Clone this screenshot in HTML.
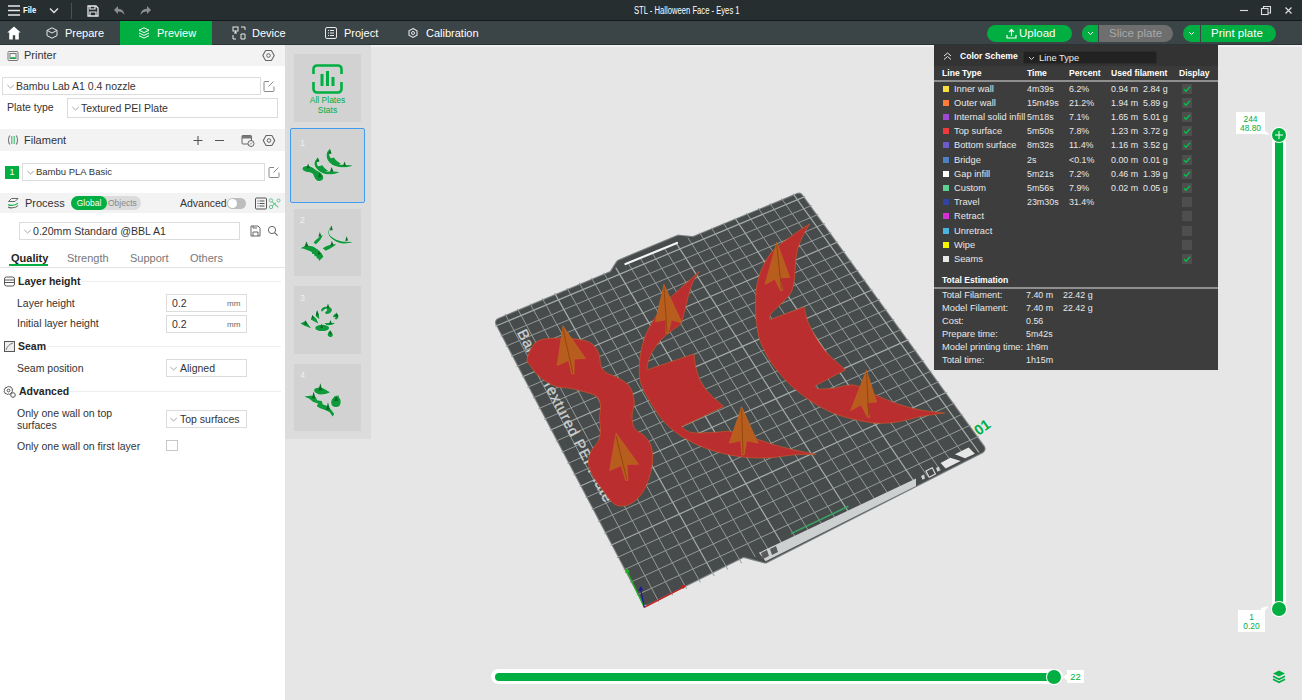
<!DOCTYPE html>
<html><head><meta charset="utf-8">
<style>
*{margin:0;padding:0;box-sizing:border-box}
html,body{width:1302px;height:700px;overflow:hidden;background:#e6e6e6;font-family:"Liberation Sans",sans-serif;color:#262626}
.a{position:absolute;white-space:nowrap}
#title{position:absolute;left:0;top:0;width:1302px;height:21px;background:#262e30;border-bottom:1px solid #131819}
#tabs{position:absolute;left:0;top:21px;width:1302px;height:24px;background:#3b4446;border-bottom:1px solid #2c3335}
.tw{color:#fff;font-size:11px;line-height:12px}
.lp{position:absolute;left:0;top:45px;width:285px;height:655px;background:#fff}
.hdr{position:absolute;left:0;width:285px;background:#f3f3f3}
.lbl{font-size:10.5px;line-height:12px;color:#333}
.combo{position:absolute;border:1px solid #dcdcdc;background:#fff}
.sec{font-size:10.5px;line-height:12px;font-weight:bold;color:#262626}
.legend{position:absolute;left:934px;top:45px;width:284px;height:325px;background:#3d3d3d}
.lg{font-size:9.3px;line-height:10px;color:#e8e8e8}
.lgb{font-size:8.6px;line-height:10px;color:#fff;font-weight:bold}
.sq{position:absolute;width:6px;height:6px}
.cb{position:absolute;width:10px;height:10px;background:#4e4e4e}
.vl{font-size:8px;line-height:10px;color:#00ae42;text-align:center}
</style></head><body>
<!-- title bar -->
<div id="title">
 <svg class="a" style="left:8px;top:5px" width="13" height="11" viewBox="0 0 13 11"><path d="M0 1h12M0 5.5h12M0 10h12" stroke="#e8e8e8" stroke-width="1.5"/></svg>
 <div class="a" style="left:23px;top:5px;font-size:9px;line-height:11px;color:#fff;font-weight:bold;transform:scaleX(.85);transform-origin:left">File</div>
 <svg class="a" style="left:49px;top:7px" width="10" height="7" viewBox="0 0 10 7"><path d="M1 1.5l4 4 4-4" stroke="#e8e8e8" stroke-width="1.3" fill="none"/></svg>
 <div class="a" style="left:71px;top:3px;width:1px;height:16px;background:#4a5254"></div>
 <svg class="a" style="left:87px;top:5px" width="12" height="12" viewBox="0 0 12 12"><path d="M1 1h8l2 2v8H1z" stroke="#e8e8e8" stroke-width="1.3" fill="none"/><path d="M3 1v3h5V1M3 11V7h6v4" stroke="#e8e8e8" stroke-width="1.2" fill="none"/></svg>
 <svg class="a" style="left:113px;top:5px" width="12" height="11" viewBox="0 0 12 11"><path d="M5 1L1 5l4 4V6.5c3 0 5 1 6.5 3.5C11 6 9 4 5 3.8z" fill="#8a8f90"/></svg>
 <svg class="a" style="left:140px;top:5px" width="12" height="11" viewBox="0 0 12 11"><path d="M7 1l4 4-4 4V6.5c-3 0-5 1-6.5 3.5C1 6 3 4 7 3.8z" fill="#8a8f90"/></svg>
 <div class="a" style="left:634px;top:5px;font-size:10px;line-height:12px;color:#fff;transform:scaleX(.765);transform-origin:left">STL - Halloween Face - Eyes 1</div>
 <svg class="a" style="left:1239px;top:5px" width="60" height="12" viewBox="0 0 60 12"><path d="M1 5.5h8" stroke="#ddd" stroke-width="1.1"/><rect x="22.5" y="3.5" width="6.5" height="6" fill="none" stroke="#ddd" stroke-width="1.1"/><path d="M24.5 3.5V1.5h7v6.5h-2.5" fill="none" stroke="#ddd" stroke-width="1.1"/><path d="M46.5 2.5l6 6M52.5 2.5l-6 6" stroke="#ddd" stroke-width="1.2"/></svg>
</div>
<!-- tab bar -->
<div id="tabs">
 <svg class="a" style="left:7px;top:5px" width="14" height="14" viewBox="0 0 14 14"><path d="M7 .5L.3 6.6h1.9V13.5h3.6V9.2h2.4v4.3h3.6V6.6h1.9z" fill="#fff"/></svg>
 <svg class="a" style="left:46px;top:6px" width="12" height="12" viewBox="0 0 12 12"><path d="M6 .8l5 2.6v5.2L6 11.2 1 8.6V3.4z M1 3.4l5 2.6 5-2.6" stroke="#e8e8e8" stroke-width="1" fill="none"/></svg>
 <div class="a tw" style="left:65px;top:6px">Prepare</div>
 <div class="a" style="left:120px;top:0;width:92px;height:24px;background:#00ae42"></div>
 <svg class="a" style="left:138px;top:6px" width="12" height="12" viewBox="0 0 12 12"><path d="M6 .8l5 2.4-5 2.4-5-2.4z M1 6l5 2.4L11 6 M1 8.7l5 2.4 5-2.4" stroke="#fff" stroke-width="1" fill="none"/></svg>
 <div class="a tw" style="left:157px;top:6px">Preview</div>
 <svg class="a" style="left:232px;top:5px" width="14" height="14" viewBox="0 0 14 14"><rect x="1" y="1" width="5" height="4" stroke="#e8e8e8" fill="none"/><path d="M3.5 5v2M2 7h3M1 9v4h3M9 1h4v3M9 8h4v5H9z" stroke="#e8e8e8" fill="none"/></svg>
 <div class="a tw" style="left:252px;top:6px">Device</div>
 <svg class="a" style="left:325px;top:6px" width="12" height="12" viewBox="0 0 12 12"><rect x=".5" y=".5" width="11" height="11" rx="1.5" stroke="#e8e8e8" fill="none"/><path d="M3 3.5h1M5 3.5h4M3 6h1M5 6h4M3 8.5h1M5 8.5h4" stroke="#e8e8e8"/></svg>
 <div class="a tw" style="left:344px;top:6px">Project</div>
 <svg class="a" style="left:408px;top:7px" width="10" height="10" viewBox="0 0 10 10"><path d="M5 .6l4 2.2v4.4L5 9.4 1 7.2V2.8z" stroke="#e8e8e8" stroke-width="1.1" fill="none"/><circle cx="5" cy="5" r="1.5" stroke="#e8e8e8" fill="none"/></svg>
 <div class="a tw" style="left:426px;top:6px">Calibration</div>
 <!-- buttons -->
 <div class="a" style="left:987px;top:4px;width:85px;height:17px;border-radius:9px;background:#00ae42"></div>
 <svg class="a" style="left:1006px;top:7px" width="11" height="11" viewBox="0 0 11 11"><path d="M5.5 8V1.5M3 4l2.5-2.5L8 4M1 7v3h9V7" stroke="#fff" stroke-width="1.2" fill="none"/></svg>
 <div class="a tw" style="left:1019px;top:6px;font-size:11.5px">Upload</div>
 <div class="a" style="left:1082px;top:4px;width:91px;height:17px;border-radius:9px;background:#6e6e6e;overflow:hidden"><div style="position:absolute;left:0;top:0;width:16px;height:17px;background:#00ae42"></div><div style="position:absolute;left:16px;top:0;width:1px;height:17px;background:#3b4446"></div></div>
 <svg class="a" style="left:1087px;top:10px" width="7" height="5" viewBox="0 0 7 5"><path d="M1 1l2.5 2.5L6 1" stroke="#fff" stroke-width="1" fill="none"/></svg>
 <div class="a tw" style="left:1109px;top:6px;font-size:11.5px;color:#a9a9a9">Slice plate</div>
 <div class="a" style="left:1183px;top:4px;width:93px;height:17px;border-radius:9px;background:#00ae42;overflow:hidden"><div style="position:absolute;left:17px;top:0;width:1px;height:17px;background:#3b4446"></div></div>
 <svg class="a" style="left:1188px;top:10px" width="7" height="5" viewBox="0 0 7 5"><path d="M1 1l2.5 2.5L6 1" stroke="#fff" stroke-width="1" fill="none"/></svg>
 <div class="a tw" style="left:1211px;top:6px;font-size:11.5px">Print plate</div>
</div>
<!-- left panel -->
<div class="lp">
 <div class="hdr" style="top:0;height:21px"></div>
 <svg class="a" style="left:7px;top:5px" width="12" height="12" viewBox="0 0 12 12"><rect x="1" y="1.5" width="10" height="9" rx="1" stroke="#777" fill="none"/><rect x="3" y="3.5" width="6" height="5" stroke="#777" fill="none"/><path d="M3.5 8h5" stroke="#00ae42" stroke-width="1.5"/></svg>
 <div class="a lbl" style="left:24px;top:4px;font-size:11px">Printer</div>
 <svg class="a" style="left:262px;top:4px" width="13" height="13" viewBox="0 0 13 13"><path d="M12.20,6.50 L10.83,9.00 L9.35,11.44 L6.50,11.50 L3.65,11.44 L2.17,9.00 L0.80,6.50 L2.17,4.00 L3.65,1.56 L6.50,1.50 L9.35,1.56 L10.83,4.00Z" stroke="#666" stroke-width="1.1" stroke-linejoin="round" fill="none"/><circle cx="6.5" cy="6.5" r="1.8" stroke="#666" fill="none"/></svg>
 <div class="combo" style="left:2px;top:32px;width:259px;height:18px"></div>
 <svg class="a" style="left:7px;top:39px" width="8" height="5" viewBox="0 0 8 5"><path d="M.4 1l3.2 3 3.2-3" stroke="#9a9a9a" stroke-width=".9" fill="none"/></svg>
 <div class="a lbl" style="left:16px;top:35px;font-size:10.5px">Bambu Lab A1 0.4 nozzle</div>
 <svg class="a" style="left:263px;top:35px" width="12" height="12" viewBox="0 0 12 12"><path d="M6 1.5H2A1 1 0 0 0 1 2.5v8a1 1 0 0 0 1 1h8a1 1 0 0 0 1-1V6.5" stroke="#888" fill="none"/><path d="M5.5 6.5l5-5" stroke="#888" fill="none"/></svg>
 <div class="a lbl" style="left:7px;top:56px;font-size:10.5px">Plate type</div>
 <div class="combo" style="left:67px;top:53px;width:211px;height:20px"></div>
 <svg class="a" style="left:72px;top:61px" width="8" height="5" viewBox="0 0 8 5"><path d="M.4 1l3.2 3 3.2-3" stroke="#9a9a9a" stroke-width=".9" fill="none"/></svg>
 <div class="a lbl" style="left:81px;top:57px;font-size:10.5px">Textured PEI Plate</div>

 <div class="hdr" style="top:84px;height:22px"></div>
 <svg class="a" style="left:7px;top:89px" width="12" height="12" viewBox="0 0 12 12"><path d="M2.8 1.5C1 4 1 8 2.8 10.5M9.2 1.5C11 4 11 8 9.2 10.5" stroke="#777" stroke-width="1.1" fill="none"/><path d="M4.8 2v8M7.2 2v8" stroke="#3dbb6a" stroke-width="1.1"/></svg>
 <div class="a lbl" style="left:24px;top:89px;font-size:11px">Filament</div>
 <svg class="a" style="left:192px;top:89px" width="90" height="13" viewBox="0 0 90 13"><path d="M6 2v9M1.5 6.5h9M23 6.5h9" stroke="#555" stroke-width="1.1"/><rect x="50" y="1.5" width="9.5" height="8.5" rx="1" stroke="#666" fill="none"/><path d="M50 1.5h9.5v3H50z" fill="#777"/><circle cx="59" cy="9.5" r="3" fill="#f3f3f3" stroke="#666"/><path d="M58 10.5l2-2" stroke="#666" stroke-width=".8"/><path d="M82.70,6.50 L81.33,9.00 L79.85,11.44 L77.00,11.50 L74.15,11.44 L72.67,9.00 L71.30,6.50 L72.67,4.00 L74.15,1.56 L77.00,1.50 L79.85,1.56 L81.33,4.00Z" stroke="#666" stroke-width="1.1" stroke-linejoin="round" fill="none"/><circle cx="77" cy="6.5" r="1.8" stroke="#666" fill="none"/></svg>

 <div class="a" style="left:5px;top:121px;width:14px;height:13px;background:#00ae42;color:#fff;font-size:9px;line-height:13px;text-align:center">1</div>
 <div class="combo" style="left:22px;top:118px;width:243px;height:18px"></div>
 <svg class="a" style="left:27px;top:125px" width="8" height="5" viewBox="0 0 8 5"><path d="M.4 1l3.2 3 3.2-3" stroke="#9a9a9a" stroke-width=".9" fill="none"/></svg>
 <div class="a lbl" style="left:36px;top:121px;font-size:9.5px">Bambu PLA Basic</div>
 <svg class="a" style="left:268px;top:121px" width="12" height="12" viewBox="0 0 12 12"><path d="M6 1.5H2A1 1 0 0 0 1 2.5v8a1 1 0 0 0 1 1h8a1 1 0 0 0 1-1V6.5" stroke="#888" fill="none"/><path d="M5.5 6.5l5-5" stroke="#888" fill="none"/></svg>

 <div class="hdr" style="top:148px;height:20px"></div>
 <svg class="a" style="left:7px;top:152px" width="12" height="12" viewBox="0 0 12 12"><path d="M1.5 4.5L4.5 1.5H11L8 4.5Z" stroke="#666" stroke-width="1" fill="none"/><path d="M1.2 7.5C2.5 8.8 8.5 8.8 11 6" stroke="#00ae42" stroke-width="1.1" fill="none"/><path d="M1.2 10C2.5 11.3 8.5 11.3 11 8.5" stroke="#666" stroke-width="1.1" fill="none"/></svg>
 <div class="a lbl" style="left:25px;top:152px;font-size:11px">Process</div>
 <div class="a" style="left:71px;top:151px;width:70px;height:14px;border-radius:7px;background:#dcdcdc"></div>
 <div class="a" style="left:71px;top:151px;width:36px;height:14px;border-radius:7px;background:#00ae42;color:#fff;font-size:8.5px;line-height:14px;text-align:center">Global</div>
 <div class="a" style="left:108px;top:151px;font-size:8.5px;line-height:14px;color:#888">Objects</div>
 <div class="a lbl" style="left:180px;top:152px;font-size:10.5px">Advanced</div>
 <div class="a" style="left:227px;top:153px;width:19px;height:11px;border-radius:6px;background:#bdbdbd"></div>
 <div class="a" style="left:228px;top:154px;width:9px;height:9px;border-radius:5px;background:#fff"></div>
 <svg class="a" style="left:255px;top:152px" width="26" height="13" viewBox="0 0 26 13"><rect x=".5" y="1" width="11" height="11" rx="1" stroke="#555" fill="none"/><path d="M2.5 4h1M4.5 4h5M2.5 6.5h1M4.5 6.5h5M2.5 9h1M4.5 9h5" stroke="#555"/><circle cx="16" cy="3.5" r="1.7" stroke="#6cc58e" fill="none"/><circle cx="16" cy="10" r="1.7" stroke="#6cc58e" fill="none"/><circle cx="23.5" cy="3.5" r="1.5" stroke="#6cc58e" fill="none"/><path d="M17.3 4.8l6 5.5M17.3 8.8l3.5-3" stroke="#6cc58e" stroke-width="1.1"/></svg>

 <div class="combo" style="left:19px;top:177px;width:221px;height:18px"></div>
 <svg class="a" style="left:24px;top:184px" width="8" height="5" viewBox="0 0 8 5"><path d="M.4 1l3.2 3 3.2-3" stroke="#9a9a9a" stroke-width=".9" fill="none"/></svg>
 <div class="a lbl" style="left:33px;top:180px;font-size:10.6px">0.20mm Standard @BBL A1</div>
 <svg class="a" style="left:250px;top:180px" width="30" height="12" viewBox="0 0 30 12"><path d="M1 1h7l2 2v8H1z" stroke="#666" fill="none"/><path d="M3 11V7h5v4M3 1v2h4" stroke="#666" fill="none"/><circle cx="22" cy="5" r="3.6" stroke="#666" fill="none"/><path d="M24.6 7.6l3 3" stroke="#666" stroke-width="1.2"/></svg>

 <div class="a lbl" style="left:11px;top:207px;font-size:11px;font-weight:bold;color:#262626">Quality</div>
 <div class="a" style="left:9px;top:219px;width:39px;height:2px;background:#00ae42"></div>
 <div class="a lbl" style="left:67px;top:207px;font-size:11px;color:#777">Strength</div>
 <div class="a lbl" style="left:130px;top:207px;font-size:11px;color:#777">Support</div>
 <div class="a lbl" style="left:190px;top:207px;font-size:11px;color:#777">Others</div>
 <div class="a" style="left:0;top:222px;width:285px;height:1px;background:#e3e3e3"></div>

 <svg class="a" style="left:4px;top:231px" width="11" height="11" viewBox="0 0 11 11"><rect x=".5" y="1" width="10" height="9" rx="2" stroke="#555" fill="none"/><path d="M1 4h9M1 6.5h9" stroke="#555"/></svg>
 <div class="a sec" style="left:18px;top:230px">Layer height</div>
 <div class="a" style="left:81px;top:236px;width:200px;height:1px;background:#eeeeee"></div>
 <div class="a lbl" style="left:17px;top:252px">Layer height</div>
 <div class="combo" style="left:166px;top:249px;width:81px;height:18px"></div>
 <div class="a lbl" style="left:172px;top:252px">0.2</div>
 <div class="a" style="left:227px;top:254px;font-size:8px;line-height:10px;color:#666">mm</div>
 <div class="a lbl" style="left:17px;top:272px">Initial layer height</div>
 <div class="combo" style="left:166px;top:270px;width:81px;height:18px"></div>
 <div class="a lbl" style="left:172px;top:273px">0.2</div>
 <div class="a" style="left:227px;top:275px;font-size:8px;line-height:10px;color:#666">mm</div>

 <svg class="a" style="left:4px;top:296px" width="11" height="11" viewBox="0 0 11 11"><rect x=".5" y=".5" width="10" height="10" stroke="#555" fill="#eee"/><path d="M2 9C3 5 6 3 9 2" stroke="#777" fill="none"/></svg>
 <div class="a sec" style="left:18px;top:295px">Seam</div>
 <div class="a" style="left:48px;top:301px;width:233px;height:1px;background:#eeeeee"></div>
 <div class="a lbl" style="left:17px;top:317px">Seam position</div>
 <div class="combo" style="left:166px;top:314px;width:81px;height:18px"></div>
 <svg class="a" style="left:170px;top:321px" width="8" height="5" viewBox="0 0 8 5"><path d="M.4 1l3.2 3 3.2-3" stroke="#9a9a9a" stroke-width=".9" fill="none"/></svg>
 <div class="a lbl" style="left:180px;top:317px">Aligned</div>

 <svg class="a" style="left:3px;top:340px" width="13" height="13" viewBox="0 0 13 13"><path d="M5.5 1l1 1 1.4-.2.4 1.3 1.2.7-.4 1.3.6 1.1-1.1.9v1.3l-1.4.2-.8 1-1.1-.7-1.1.7-.8-1-1.4-.2V7.6l-1.1-.9.6-1.1-.4-1.3 1.2-.7.4-1.3 1.4.2z" stroke="#555" fill="none"/><circle cx="5.5" cy="5.5" r="1.4" stroke="#555" fill="none"/><circle cx="10" cy="10" r="2.3" stroke="#555" fill="#fff"/></svg>
 <div class="a sec" style="left:19px;top:340px">Advanced</div>
 <div class="a" style="left:70px;top:346px;width:211px;height:1px;background:#eeeeee"></div>
 <div class="a lbl" style="left:17px;top:362px">Only one wall on top</div>
 <div class="a lbl" style="left:17px;top:374px">surfaces</div>
 <div class="combo" style="left:166px;top:365px;width:81px;height:18px"></div>
 <svg class="a" style="left:170px;top:372px" width="8" height="5" viewBox="0 0 8 5"><path d="M.4 1l3.2 3 3.2-3" stroke="#9a9a9a" stroke-width=".9" fill="none"/></svg>
 <div class="a lbl" style="left:180px;top:368px">Top surfaces</div>
 <div class="a lbl" style="left:17px;top:395px">Only one wall on first layer</div>
 <div class="a" style="left:166px;top:395px;width:12px;height:11px;border:1px solid #c8c8c8;background:#fff"></div>
</div>
<!-- plate list -->
<div id="vline" class="a" style="left:285px;top:45px;width:1017px;height:2px;background:#f1f1f1"></div>
<div class="a" style="left:285px;top:45px;width:86px;height:394px;background:#dcdcdc"></div>
<div class="a" style="left:294px;top:54px;width:67px;height:68px;background:#d2d2d2"></div>
<svg class="a" style="left:312px;top:64px" width="31" height="30" viewBox="0 0 31 30"><path d="M1.5 10V5a3.5 3.5 0 0 1 3.5-3.5h21a3.5 3.5 0 0 1 3.5 3.5v5M1.5 18v7a3.5 3.5 0 0 0 3.5 3.5h21a3.5 3.5 0 0 0 3.5-3.5v-7" stroke="#00ae42" stroke-width="2.6" fill="none"/><path d="M10 10v12M15.5 7v15M21 13v9" stroke="#00ae42" stroke-width="3"/></svg>
<div class="a" style="left:294px;top:95px;width:67px;font-size:8.5px;line-height:10px;color:#00ae42;text-align:center">All Plates<br>Stats</div>

<div class="a" style="left:290px;top:128px;width:75px;height:75px;border:1.5px solid #3f9cf0;border-radius:2px;background:#d2d2d2"></div>
<div class="a" style="left:300px;top:138px;font-size:9px;line-height:10px;color:#efefef">1</div>
<svg class="a" style="left:294px;top:131px" width="67" height="70" viewBox="0 0 670 700">
<g fill="#0e9a3a" stroke="#eeeeee" stroke-width="7" paint-order="stroke">
<path d="M85,375 C85,348 132,343 168,357 C198,369 215,390 240,403 C276,420 298,445 292,476 C286,502 250,508 226,492 C203,476 203,447 188,427 C170,410 140,412 113,404 C94,397 85,390 85,375Z"/>
<path d="M245,262 C230,292 222,325 240,352 L285,343 C297,365 315,385 342,395 L314,405 C352,405 400,403 457,410 C420,430 358,440 305,428 C255,412 215,378 205,336 C200,305 220,278 245,262Z"/>
<path d="M366,176 C350,208 345,245 368,272 L400,266 C418,293 440,313 467,324 L450,336 C490,340 540,342 592,345 C545,366 468,372 398,345 C355,322 326,288 326,242 C326,213 343,192 366,176Z"/>
</g>
<g fill="#0a6b26"><path d="M140,325 L125,375 L160,370Z M238,262 L225,310 L255,305Z M375,360 L360,410 L395,405Z M505,305 L490,350 L520,345Z M255,415 L240,465 L275,460Z M360,178 L345,230 L375,225Z"/></g></svg>
<div class="a" style="left:294px;top:209px;width:67px;height:67px;background:#d2d2d2"></div>
<div class="a" style="left:300px;top:215px;font-size:9px;line-height:10px;color:#efefef">2</div>
<svg class="a" style="left:294px;top:209px" width="67" height="67" viewBox="0 0 700 700">
<g fill="#0e9a3a" stroke="#eeeeee" stroke-width="7" paint-order="stroke">
<path d="M65,410 L130,378 L200,392 L245,420 L290,465 L308,500 L262,542 L252,515 L238,520 L232,490 L215,495 L210,470 L190,470 L185,448 L160,440 L100,415Z"/>
<path d="M205,350 C225,320 260,290 300,268 C295,300 270,335 225,370 Z"/>
<path d="M300,410 C330,385 390,365 440,370 C410,395 370,420 330,435 Z"/>
<path d="M390,175 C365,215 355,260 385,285 C420,310 450,330 500,340 C540,342 580,343 620,345 C580,360 530,365 480,355 C440,345 400,320 375,290 C350,260 355,210 390,175Z"/>
</g>
<g fill="#0a6b26"><path d="M130,340 L110,395 L150,390Z M270,240 L255,290 L285,285Z M395,335 L380,385 L415,380Z M550,285 L535,335 L565,330Z M260,430 L245,480 L280,475Z M390,170 L375,225 L405,220Z"/></g></svg>
<div class="a" style="left:294px;top:286px;width:67px;height:68px;background:#d2d2d2"></div>
<div class="a" style="left:300px;top:293px;font-size:9px;line-height:10px;color:#efefef">3</div>
<svg class="a" style="left:294px;top:286px" width="67" height="68" viewBox="0 0 690 700">
<g fill="#0e9a3a" stroke="#eeeeee" stroke-width="7" paint-order="stroke">
<path d="M278,245 C300,205 360,200 388,235 C398,265 370,290 330,290 L318,268 C340,262 348,245 335,232 C315,238 298,255 285,268Z"/>
<path d="M235,250 L258,300 L262,342 L222,310Z"/>
<path d="M190,300 L232,340 L252,388 L172,345Z"/>
<path d="M65,385 L120,358 L178,438 L108,410Z"/>
<path d="M398,322 C410,290 430,270 455,295 C465,320 450,345 428,345 L415,330 L438,318Z"/>
<path d="M310,380 L425,378 C405,400 370,408 335,402Z"/>
<ellipse cx="290" cy="432" rx="72" ry="32"/>
<path d="M372,455 C385,470 402,490 400,505 C398,522 385,528 370,526 C350,522 343,505 348,490 C352,478 362,465 372,455Z"/>
</g>
<g fill="#0a6b26"><path d="M120,350 L105,400 L135,395Z M240,250 L225,300 L255,295Z M350,180 L335,230 L365,225Z M440,270 L425,320 L455,315Z M375,350 L360,395 L390,390Z M285,385 L270,435 L300,430Z M375,455 L360,500 L390,495Z M190,295 L180,335 L205,330Z"/></g></svg>
<div class="a" style="left:294px;top:364px;width:67px;height:67px;background:#d2d2d2"></div>
<div class="a" style="left:300px;top:370px;font-size:9px;line-height:10px;color:#efefef">4</div>
<svg class="a" style="left:294px;top:364px" width="67" height="67" viewBox="0 0 700 700">
<g fill="#0e9a3a" stroke="#eeeeee" stroke-width="7" paint-order="stroke">
<path d="M210,270 C225,245 270,240 310,255 C335,268 355,285 380,292 C350,312 300,325 255,315 C225,305 205,290 210,270Z"/>
<path d="M105,340 L180,328 L230,350 L242,380 L292,386 L300,420 L350,440 L382,470 L420,520 L405,552 L372,505 L330,482 L272,462 L238,442 L250,412 L200,396 L160,362Z"/>
<path d="M420,328 L440,345 L465,325 L470,350 C490,370 495,400 480,430 C460,455 420,455 400,435 C380,410 385,370 420,345Z"/>
</g>
<g fill="#0a6b26"><path d="M275,200 L255,280 L295,275Z M205,290 L185,360 L225,355Z M355,400 L335,480 L375,475Z M440,325 L420,390 L460,385Z"/></g></svg>
<svg class="a" style="left:0;top:0" width="1302" height="700" viewBox="0 0 1302 700">
<defs><clipPath id="pc"><path d="M643.9,608.7 L987.5,448.4 L800.8,190.4 L491.6,319.5Z"/></clipPath></defs>
<path d="M646.4,600.7 L743.2,552.6 L765.0,558.5 L980.5,448.8 L798.8,197.7 L693.7,241.1 L678.8,239.6 L620.4,264.0 L613.4,275.0 L500.0,322.5Z" fill="#7b8080" stroke="#7b8080" stroke-width="10" stroke-linejoin="round"/>
<path d="M646.4,600.7 L743.2,552.6 L765.0,558.5 L980.5,448.8 L798.8,197.7 L693.7,241.1 L678.8,239.6 L620.4,264.0 L613.4,275.0 L500.0,322.5Z" fill="#474b4b" stroke="#474b4b" stroke-width="7.8" stroke-linejoin="round"/>
<g clip-path="url(#pc)">
<path d="M659.7,603.4L504.5,312.8M634.8,596.0L980.4,435.5M673.6,596.9L516.9,307.6M628.2,583.3L972.2,424.3M687.5,590.4L529.4,302.4M621.6,570.9L964.2,413.3M701.3,584.0L541.7,297.3M615.1,558.5L956.3,402.3M728.8,571.1L566.4,287.0M602.4,534.2L940.7,380.8M742.5,564.7L578.6,281.9M596.1,522.3L933.0,370.2M756.2,558.4L590.8,276.8M589.9,510.4L925.3,359.6M769.7,552.0L603.0,271.7M583.8,498.7L917.8,349.2M796.7,539.4L627.2,261.6M571.7,475.7L902.9,328.7M810.1,533.2L639.3,256.6M565.7,464.4L895.6,318.7M823.5,526.9L651.3,251.6M559.8,453.1L888.4,308.7M836.8,520.7L663.3,246.6M554.0,442.0L881.2,298.8M863.3,508.3L687.1,236.6M542.5,420.2L867.0,279.2M876.5,502.2L698.9,231.7M536.9,409.4L860.1,269.6M889.6,496.1L710.7,226.8M531.3,398.7L853.2,260.1M902.6,490.0L722.5,221.8M525.7,388.2L846.3,250.7M928.6,477.8L745.9,212.1M514.8,367.4L832.9,232.1M941.5,471.8L757.6,207.2M509.4,357.1L826.2,222.9M954.4,465.8L769.2,202.4M504.1,347.0L819.6,213.8M967.2,459.8L780.8,197.5M498.8,336.9L813.1,204.9" stroke="#939a98" stroke-width="1" fill="none"/>
<path d="M715.1,577.5L554.1,292.1M608.7,546.3L948.4,391.5M783.2,545.7L615.1,266.6M577.7,487.2L910.3,338.9M850.1,514.5L675.2,241.6M548.2,431.0L874.1,289.0M915.7,483.9L734.2,217.0M520.2,377.7L839.6,241.3M980.0,453.8L792.3,192.7M493.6,327.0L806.6,195.9" stroke="#a3aaa7" stroke-width="1.25" fill="none"/>
</g>
<!-- bottom strip -->
<path d="M758.9,552.8 L916,478.4 L916,486 L765.6,561.2 Z" fill="#cdd0d0"/>
<path d="M791,533.6 L848.4,506.3" stroke="#3aa565" stroke-width="1.6"/>
<path d="M761,553 L767,550 L769,556 L763,559Z" fill="#5a5a5a"/>
<path d="M770,549 L776,546 L778,552 L772,555Z" fill="#5a5a5a"/>
<path d="M940.6,462.9 L950.3,457.7 L960.6,461.1 L945.7,468.6Z" fill="#e6e6e6"/>
<path d="M954.9,454.3 L968.6,447.4 L974.9,453.7 L965.1,458.3Z" fill="#e6e6e6"/>
<rect x="0" y="0" width="7" height="7" transform="translate(926,471) rotate(-27)" fill="none" stroke="#e0e0e0" stroke-width="1.1"/>
<path d="M921,476 l3,-1.5 l1,4 l-2.5,1.2z M936,468 l3,-1.5 l1,4 l-2.5,1.2z" fill="#d0d0d0"/>
<path d="M625.5,264 L677,243" stroke="#f4f4f4" stroke-width="2.2" stroke-linecap="round"/>
<text transform="translate(516.8,332.6) rotate(62.8)" style="font-family:'Liberation Sans';font-size:15px;letter-spacing:0.7px" fill="#cdd0d0" stroke="#cdd0d0" stroke-width="0.3">Bambu Textured PEI Plate</text>
<!--shapes-->
<path d="M527.1,358.9 C527.9,355.0 531.1,346.3 535.1,342.9 C539.1,339.5 543.8,338.9 551.0,338.3 C558.2,337.7 571.7,338.4 578.6,339.4 C585.5,340.3 588.9,341.5 592.3,344.0 C595.7,346.5 597.5,350.6 599.0,354.3 C600.5,358.0 599.8,363.0 601.0,366.0 C602.2,369.0 603.0,370.4 606.0,372.5 C609.0,374.6 615.3,376.2 619.3,378.6 C623.3,381.0 627.5,383.2 630.0,387.1 C632.5,391.0 633.9,397.5 634.3,402.1 C634.6,406.8 632.1,410.7 632.1,415.0 C632.1,419.3 632.1,424.3 634.3,427.9 C636.4,431.5 642.1,433.2 645.0,436.4 C647.9,439.6 650.1,442.8 651.4,447.1 C652.6,451.4 652.9,457.1 652.5,462.1 C652.1,467.1 650.9,472.1 649.3,477.1 C647.7,482.1 645.8,487.8 642.9,492.1 C640.0,496.4 635.7,500.6 632.1,502.9 C628.5,505.2 624.6,506.1 621.4,506.1 C618.2,506.1 615.8,505.2 612.9,502.9 C610.0,500.6 607.5,496.4 604.3,492.1 C601.1,487.8 596.2,481.8 593.6,477.1 C591.0,472.4 588.9,468.3 588.5,464.0 C588.1,459.7 589.3,455.3 591.0,451.4 C592.7,447.5 596.9,444.3 598.5,440.7 C600.1,437.1 600.3,433.8 600.5,430.0 C600.7,426.2 599.5,422.2 599.5,418.0 C599.5,413.8 601.1,408.7 600.5,405.0 C599.9,401.3 598.9,398.3 596.0,396.0 C593.1,393.7 587.3,392.7 583.0,391.4 C578.7,390.1 574.5,389.0 570.0,388.2 C565.5,387.4 560.8,388.2 555.7,386.3 C550.7,384.4 543.9,380.4 539.7,377.0 C535.5,373.6 532.7,369.0 530.6,366.0 C528.5,363.0 526.4,362.8 527.1,358.9Z" fill="#bb2e2f" stroke="#c9582a" stroke-width=".7"/>
<path d="M699.3,271.4 C698.2,273.2 694.7,278.2 692.9,282.1 C691.1,286.0 689.9,290.7 688.6,295.0 C687.4,299.3 686.6,303.2 685.4,307.9 C684.1,312.5 683.1,319.3 681.1,322.9 C679.1,326.5 676.6,326.8 673.6,329.3 C670.6,331.8 666.1,334.7 662.9,337.9 C659.7,341.1 656.6,345.0 654.3,348.6 C652.0,352.2 650.1,355.7 648.9,359.3 C647.6,362.9 647.1,368.2 646.8,370.0 L693.9,353.9 C694.4,356.9 695.1,366.2 697.1,372.1 C699.1,378.0 701.3,383.6 705.7,389.3 C710.1,395.1 720.6,403.7 723.6,406.6 L681.5,426.6 C682.4,427.3 684.7,429.8 687.0,430.8 C689.3,431.9 690.5,432.7 695.3,432.9 C700.1,433.1 710.0,432.4 716.0,432.2 C722.0,432.0 725.4,430.7 731.2,431.5 C737.0,432.3 743.9,434.9 750.6,437.0 C757.3,439.1 764.4,441.8 771.3,443.9 C778.2,446.0 784.7,447.7 792.1,449.4 C799.5,451.1 811.7,453.5 815.6,454.3 C811.7,454.4 799.5,454.4 792.1,455.0 C784.7,455.6 778.2,457.2 771.3,457.7 C764.4,458.1 757.5,458.1 750.6,457.7 C743.7,457.2 736.8,456.4 729.9,455.0 C723.0,453.6 715.3,451.5 709.1,449.4 C702.9,447.3 698.2,445.5 692.5,442.5 C686.8,439.5 679.9,435.6 674.6,431.5 C669.3,427.4 664.9,422.8 660.7,417.7 C656.6,412.6 652.9,406.6 649.7,401.1 C646.5,395.7 643.1,389.8 641.4,385.0 C639.7,380.2 639.5,377.1 639.3,372.1 C639.1,367.1 639.5,360.7 640.4,355.0 C641.3,349.3 642.5,343.6 644.6,337.9 C646.7,332.2 649.8,326.4 653.2,320.7 C656.6,315.0 660.9,308.6 665.0,303.6 C669.1,298.6 674.0,294.4 677.9,290.7 C681.8,286.9 685.0,284.3 688.6,281.1 C692.2,277.9 697.5,273.0 699.3,271.4 Z" fill="#bb2e2f" stroke="#c9582a" stroke-width=".7"/>
<path d="M809.8,224.0 C808.8,225.6 805.9,229.8 803.9,233.8 C801.9,237.8 799.4,243.3 798.0,248.0 C796.6,252.7 796.2,257.0 795.6,262.1 C795.0,267.2 795.3,273.5 794.5,278.6 C793.7,283.7 793.3,288.4 790.9,292.7 C788.5,297.0 783.6,301.0 780.3,304.5 C777.0,308.0 772.7,311.3 770.9,313.9 C769.1,316.4 769.9,318.8 769.7,319.8 L803.9,306.9 C804.7,309.6 805.9,317.1 808.6,323.4 C811.4,329.7 816.8,339.2 820.4,344.6 C824.0,350.0 825.8,351.8 830.0,356.0 C834.2,360.2 842.8,367.6 845.4,369.9 L814.7,386.0 C815.3,386.5 815.4,388.5 818.4,388.9 C821.4,389.3 826.9,388.8 833.0,388.2 C839.1,387.6 847.5,384.0 854.8,385.2 C862.1,386.4 869.4,392.2 876.7,395.4 C884.0,398.6 891.3,401.8 898.6,404.2 C905.9,406.6 912.8,408.5 920.5,410.0 C928.2,411.5 940.6,412.5 944.6,413.0 C940.6,413.6 928.2,415.2 920.5,416.6 C912.8,418.1 905.9,420.6 898.6,421.7 C891.3,422.8 884.0,423.6 876.7,423.2 C869.4,422.8 862.1,421.2 854.8,419.5 C847.5,417.8 840.3,416.0 833.0,413.0 C825.7,410.0 818.4,406.2 811.1,401.3 C803.8,396.4 795.8,390.1 789.2,383.8 C782.6,377.5 776.1,369.4 771.7,363.3 C767.3,357.2 765.2,352.4 762.9,347.3 C760.6,342.2 759.2,339.2 758.0,332.8 C756.8,326.4 755.8,317.1 755.6,309.2 C755.4,301.3 755.6,292.8 756.8,285.7 C758.0,278.6 760.0,272.7 762.7,266.8 C765.5,260.9 768.8,255.2 773.3,250.3 C777.8,245.4 785.1,240.9 789.8,237.4 C794.5,233.9 798.2,231.3 801.5,229.1 C804.8,226.9 808.4,224.8 809.8,224.0 Z" fill="#bb2e2f" stroke="#c9582a" stroke-width=".7"/>
<!--/shapes-->
<g fill="#b75d1d" stroke="#c46a26" stroke-width=".5">
<path d="M562.9,325.7 L585.7,358.6 L574.3,358.9 L574.1,374.0 L571.7,374.0 L568.5,360.4 L557.1,365.7Z"/>
<path d="M616.1,433.2 L638.6,464.3 L627.0,464.4 L628.0,480.4 L625.6,480.4 L621.2,465.6 L609.6,470.7Z"/>
<path d="M663.9,284.3 L682.1,322.9 L671.4,320.0 L668.3,333.6 L665.9,333.6 L666.1,319.7 L655.4,321.8Z"/>
<path d="M741.6,406.6 L758.2,443.2 L746.6,440.7 L744.2,455.0 L741.8,455.0 L740.8,440.7 L729.2,443.2Z"/>
<path d="M776.8,242.1 L789.8,277.4 L779.9,277.7 L782.7,290.4 L780.3,290.4 L774.9,279.2 L765.0,284.5Z"/>
<path d="M866.5,369.9 L876.7,402.0 L866.2,403.0 L869.9,417.3 L867.5,417.3 L861.0,404.8 L850.5,410.8Z"/>
</g>
<g stroke="#94470f" stroke-width="1">
<path d="M562.9,328.7 L572.9,373.0"/>
<path d="M616.1,436.2 L626.8,479.4"/>
<path d="M663.9,287.3 L667.1,332.6"/>
<path d="M741.6,409.6 L743.0,454.0"/>
<path d="M776.8,245.1 L781.5,289.4"/>
<path d="M866.5,372.9 L868.7,416.3"/>
</g>
<text transform="translate(978.5,436) rotate(-35)" style="font-family:'Liberation Sans';font-size:14.5px;font-weight:bold" fill="#00ae42">01</text>
<path d="M644.3,607.4 L627,571" stroke="#1db41d" stroke-width="1.2"/><path d="M625,573 L627,568 L630,572Z" fill="#1db41d"/>
<path d="M644.3,607.4 L684,587" stroke="#cc1a1a" stroke-width="1.2"/><path d="M681,585 L686.5,585.5 L683,589Z" fill="#cc1a1a"/>
<path d="M644.3,607.4 L640.8,590" stroke="#1a1a9a" stroke-width="1.2"/><path d="M638.5,591 L640.5,586 L643,590Z" fill="#1a1a9a"/>
</svg>

<!-- legend -->
<div class="legend">
 <div class="a" style="left:0;top:0;width:284px;height:21px;background:#333333"></div>
 <svg class="a" style="left:9px;top:7px" width="9" height="8" viewBox="0 0 9 8"><path d="M1 4l3.5-3L8 4M1 7.5l3.5-3L8 7.5" stroke="#e8e8e8" stroke-width="1" fill="none"/></svg>
 <div class="a lgb" style="left:26px;top:6px">Color Scheme</div>
 <div class="a" style="left:89px;top:6px;width:134px;height:13px;background:#222;border:1px solid #2c2c2c;border-radius:2px"></div>
 <svg class="a" style="left:94px;top:11px" width="7" height="5" viewBox="0 0 7 5"><path d="M1 1l2.5 2.5L6 1" stroke="#ddd" stroke-width=".9" fill="none"/></svg>
 <div class="a lg" style="left:105px;top:8px">Line Type</div>
 <div class="a" style="left:0;top:21px;width:284px;height:14px;background:#3a3a3a"></div>
 <div class="a lgb" style="left:8px;top:23px">Line Type</div>
 <div class="a lgb" style="left:93px;top:23px">Time</div>
 <div class="a lgb" style="left:135px;top:23px">Percent</div>
 <div class="a lgb" style="left:177px;top:23px">Used filament</div>
 <div class="a lgb" style="left:245px;top:23px">Display</div>
 <div class="a" style="left:0;top:35px;width:284px;height:2px;background:#8f8f8f"></div>
 <div class="sq" style="left:9px;top:40.6px;background:#f7df3f"></div>
 <div class="a lg" style="left:20px;top:38.6px">Inner wall</div>
 <div class="a lg" style="font-size:8.9px;left:93px;top:38.6px">4m39s</div>
 <div class="a lg" style="font-size:8.9px;left:135px;top:38.6px">6.2%</div>
 <div class="a lg" style="font-size:8.9px;left:177px;top:38.6px">0.94 m</div>
 <div class="a lg" style="font-size:8.9px;left:209px;top:38.6px">2.84 g</div>
 <div class="cb" style="left:248px;top:38.6px"></div>
 <svg class="a" style="left:249px;top:39.6px" width="8" height="8" viewBox="0 0 8 8"><path d="M1 4.2l2 2L7 1.8" stroke="#00c24a" stroke-width="1.3" fill="none"/></svg>
 <div class="sq" style="left:9px;top:54.8px;background:#fe7c34"></div>
 <div class="a lg" style="left:20px;top:52.8px">Outer wall</div>
 <div class="a lg" style="font-size:8.9px;left:93px;top:52.8px">15m49s</div>
 <div class="a lg" style="font-size:8.9px;left:135px;top:52.8px">21.2%</div>
 <div class="a lg" style="font-size:8.9px;left:177px;top:52.8px">1.94 m</div>
 <div class="a lg" style="font-size:8.9px;left:209px;top:52.8px">5.89 g</div>
 <div class="cb" style="left:248px;top:52.8px"></div>
 <svg class="a" style="left:249px;top:53.8px" width="8" height="8" viewBox="0 0 8 8"><path d="M1 4.2l2 2L7 1.8" stroke="#00c24a" stroke-width="1.3" fill="none"/></svg>
 <div class="sq" style="left:9px;top:69.0px;background:#9e49d4"></div>
 <div class="a lg" style="left:20px;top:67.0px">Internal solid infill</div>
 <div class="a lg" style="font-size:8.9px;left:93px;top:67.0px">5m18s</div>
 <div class="a lg" style="font-size:8.9px;left:135px;top:67.0px">7.1%</div>
 <div class="a lg" style="font-size:8.9px;left:177px;top:67.0px">1.65 m</div>
 <div class="a lg" style="font-size:8.9px;left:209px;top:67.0px">5.01 g</div>
 <div class="cb" style="left:248px;top:67.0px"></div>
 <svg class="a" style="left:249px;top:68.0px" width="8" height="8" viewBox="0 0 8 8"><path d="M1 4.2l2 2L7 1.8" stroke="#00c24a" stroke-width="1.3" fill="none"/></svg>
 <div class="sq" style="left:9px;top:83.2px;background:#ee3a3a"></div>
 <div class="a lg" style="left:20px;top:81.2px">Top surface</div>
 <div class="a lg" style="font-size:8.9px;left:93px;top:81.2px">5m50s</div>
 <div class="a lg" style="font-size:8.9px;left:135px;top:81.2px">7.8%</div>
 <div class="a lg" style="font-size:8.9px;left:177px;top:81.2px">1.23 m</div>
 <div class="a lg" style="font-size:8.9px;left:209px;top:81.2px">3.72 g</div>
 <div class="cb" style="left:248px;top:81.2px"></div>
 <svg class="a" style="left:249px;top:82.2px" width="8" height="8" viewBox="0 0 8 8"><path d="M1 4.2l2 2L7 1.8" stroke="#00c24a" stroke-width="1.3" fill="none"/></svg>
 <div class="sq" style="left:9px;top:97.4px;background:#6a5ccb"></div>
 <div class="a lg" style="left:20px;top:95.4px">Bottom surface</div>
 <div class="a lg" style="font-size:8.9px;left:93px;top:95.4px">8m32s</div>
 <div class="a lg" style="font-size:8.9px;left:135px;top:95.4px">11.4%</div>
 <div class="a lg" style="font-size:8.9px;left:177px;top:95.4px">1.16 m</div>
 <div class="a lg" style="font-size:8.9px;left:209px;top:95.4px">3.52 g</div>
 <div class="cb" style="left:248px;top:95.4px"></div>
 <svg class="a" style="left:249px;top:96.4px" width="8" height="8" viewBox="0 0 8 8"><path d="M1 4.2l2 2L7 1.8" stroke="#00c24a" stroke-width="1.3" fill="none"/></svg>
 <div class="sq" style="left:9px;top:111.6px;background:#4c82c4"></div>
 <div class="a lg" style="left:20px;top:109.6px">Bridge</div>
 <div class="a lg" style="font-size:8.9px;left:93px;top:109.6px">2s</div>
 <div class="a lg" style="font-size:8.9px;left:135px;top:109.6px">&lt;0.1%</div>
 <div class="a lg" style="font-size:8.9px;left:177px;top:109.6px">0.00 m</div>
 <div class="a lg" style="font-size:8.9px;left:209px;top:109.6px">0.01 g</div>
 <div class="cb" style="left:248px;top:109.6px"></div>
 <svg class="a" style="left:249px;top:110.6px" width="8" height="8" viewBox="0 0 8 8"><path d="M1 4.2l2 2L7 1.8" stroke="#00c24a" stroke-width="1.3" fill="none"/></svg>
 <div class="sq" style="left:9px;top:125.8px;background:#ffffff"></div>
 <div class="a lg" style="left:20px;top:123.8px">Gap infill</div>
 <div class="a lg" style="font-size:8.9px;left:93px;top:123.8px">5m21s</div>
 <div class="a lg" style="font-size:8.9px;left:135px;top:123.8px">7.2%</div>
 <div class="a lg" style="font-size:8.9px;left:177px;top:123.8px">0.46 m</div>
 <div class="a lg" style="font-size:8.9px;left:209px;top:123.8px">1.39 g</div>
 <div class="cb" style="left:248px;top:123.8px"></div>
 <svg class="a" style="left:249px;top:124.8px" width="8" height="8" viewBox="0 0 8 8"><path d="M1 4.2l2 2L7 1.8" stroke="#00c24a" stroke-width="1.3" fill="none"/></svg>
 <div class="sq" style="left:9px;top:140.0px;background:#5ecf8e"></div>
 <div class="a lg" style="left:20px;top:138.0px">Custom</div>
 <div class="a lg" style="font-size:8.9px;left:93px;top:138.0px">5m56s</div>
 <div class="a lg" style="font-size:8.9px;left:135px;top:138.0px">7.9%</div>
 <div class="a lg" style="font-size:8.9px;left:177px;top:138.0px">0.02 m</div>
 <div class="a lg" style="font-size:8.9px;left:209px;top:138.0px">0.05 g</div>
 <div class="cb" style="left:248px;top:138.0px"></div>
 <svg class="a" style="left:249px;top:139.0px" width="8" height="8" viewBox="0 0 8 8"><path d="M1 4.2l2 2L7 1.8" stroke="#00c24a" stroke-width="1.3" fill="none"/></svg>
 <div class="sq" style="left:9px;top:154.2px;background:#2f45a0"></div>
 <div class="a lg" style="left:20px;top:152.2px">Travel</div>
 <div class="a lg" style="font-size:8.9px;left:93px;top:152.2px">23m30s</div>
 <div class="a lg" style="font-size:8.9px;left:135px;top:152.2px">31.4%</div>
 <div class="cb" style="left:248px;top:152.2px"></div>
 <div class="sq" style="left:9px;top:168.4px;background:#d42fd8"></div>
 <div class="a lg" style="left:20px;top:166.4px">Retract</div>
 <div class="cb" style="left:248px;top:166.4px"></div>
 <div class="sq" style="left:9px;top:182.6px;background:#4ab5dc"></div>
 <div class="a lg" style="left:20px;top:180.6px">Unretract</div>
 <div class="cb" style="left:248px;top:180.6px"></div>
 <div class="sq" style="left:9px;top:196.8px;background:#f5f500"></div>
 <div class="a lg" style="left:20px;top:194.8px">Wipe</div>
 <div class="cb" style="left:248px;top:194.8px"></div>
 <div class="sq" style="left:9px;top:211.0px;background:#e8e8e8"></div>
 <div class="a lg" style="left:20px;top:209.0px">Seams</div>
 <div class="cb" style="left:248px;top:209.0px"></div>
 <svg class="a" style="left:249px;top:210.0px" width="8" height="8" viewBox="0 0 8 8"><path d="M1 4.2l2 2L7 1.8" stroke="#00c24a" stroke-width="1.3" fill="none"/></svg>
 <div class="a lgb" style="left:8px;top:229.6px">Total Estimation</div>
 <div class="a" style="left:0;top:242px;width:284px;height:1.5px;background:#8f8f8f"></div>
 <div class="a lg" style="left:8px;top:245.3px">Total Filament:</div>
 <div class="a lg" style="font-size:8.9px;left:92px;top:245.3px">7.40 m</div>
 <div class="a lg" style="font-size:8.9px;left:129px;top:245.3px">22.42 g</div>
 <div class="a lg" style="left:8px;top:258.2px">Model Filament:</div>
 <div class="a lg" style="font-size:8.9px;left:92px;top:258.2px">7.40 m</div>
 <div class="a lg" style="font-size:8.9px;left:129px;top:258.2px">22.42 g</div>
 <div class="a lg" style="left:8px;top:271.1px">Cost:</div>
 <div class="a lg" style="font-size:8.9px;left:92px;top:271.1px">0.56</div>
 <div class="a lg" style="left:8px;top:284.0px">Prepare time:</div>
 <div class="a lg" style="font-size:8.9px;left:92px;top:284.0px">5m42s</div>
 <div class="a lg" style="left:8px;top:296.9px">Model printing time:</div>
 <div class="a lg" style="font-size:8.9px;left:92px;top:296.9px">1h9m</div>
 <div class="a lg" style="left:8px;top:309.8px">Total time:</div>
 <div class="a lg" style="font-size:8.9px;left:92px;top:309.8px">1h15m</div>
</div>
<!-- vertical slider -->
<div class="a" style="left:1272px;top:128px;width:14px;height:488px;border-radius:7px;background:#fff"></div>
<div class="a" style="left:1275px;top:134px;width:8px;height:476px;background:#00ae42"></div>
<div class="a" style="left:1271px;top:127px;width:16px;height:16px;border-radius:8px;background:#fff"></div>
<div class="a" style="left:1272px;top:128px;width:14px;height:14px;border-radius:7px;background:#00ae42"></div>
<svg class="a" style="left:1272px;top:128px" width="14" height="14" viewBox="0 0 14 14"><path d="M7 3v8M3 7h8" stroke="#fff" stroke-width="1"/></svg>
<div class="a" style="left:1271px;top:601px;width:16px;height:16px;border-radius:8px;background:#fff"></div>
<div class="a" style="left:1272px;top:602px;width:14px;height:14px;border-radius:7px;background:#00ae42"></div>
<div class="a" style="left:1236px;top:112px;width:29px;height:22px;background:#fff"></div>
<div class="a vl" style="left:1236px;top:113.5px;width:29px;font-size:9.5px;line-height:9.7px;transform:scaleX(.88)">244<br>48.80</div>
<svg class="a" style="left:1262px;top:128px" width="8" height="8" viewBox="0 0 8 8"><path d="M0 0L8 7L0 6Z" fill="#fff"/></svg>
<div class="a" style="left:1238px;top:610px;width:27px;height:22px;background:#fff"></div>
<div class="a vl" style="left:1238px;top:611.5px;width:27px;font-size:9.5px;line-height:9.7px;transform:scaleX(.88)">1<br>0.20</div>
<svg class="a" style="left:1261px;top:606px" width="8" height="8" viewBox="0 0 8 8"><path d="M0 2L8 0L1 8Z" fill="#fff"/></svg>
<svg class="a" style="left:1272px;top:670px" width="14" height="14" viewBox="0 0 14 14"><path d="M7 .5l6 3-6 3-6-3z" fill="#00ae42"/><path d="M1 6.3l6 3 6-3M1 9.3l6 3 6-3" stroke="#00ae42" stroke-width="1.6" fill="none"/></svg>
<!-- horizontal slider -->
<div class="a" style="left:491px;top:669px;width:572px;height:15px;border-radius:8px;background:#fff"></div>
<div class="a" style="left:495px;top:673px;width:558px;height:8px;border-radius:4px;background:#00ae42"></div>
<div class="a" style="left:1046px;top:669px;width:16px;height:16px;border-radius:8px;background:#fff"></div>
<div class="a" style="left:1047px;top:670px;width:14px;height:14px;border-radius:7px;background:#00ae42"></div>
<div class="a" style="left:1067px;top:670px;width:17px;height:13px;background:#fff"></div>
<div class="a vl" style="left:1067px;top:671px;width:17px;font-size:9.5px;line-height:11px">22</div>
<svg class="a" style="left:1063px;top:673px" width="5" height="8" viewBox="0 0 5 8"><path d="M5 0L0 4L5 8Z" fill="#fff"/></svg>
</body></html>
